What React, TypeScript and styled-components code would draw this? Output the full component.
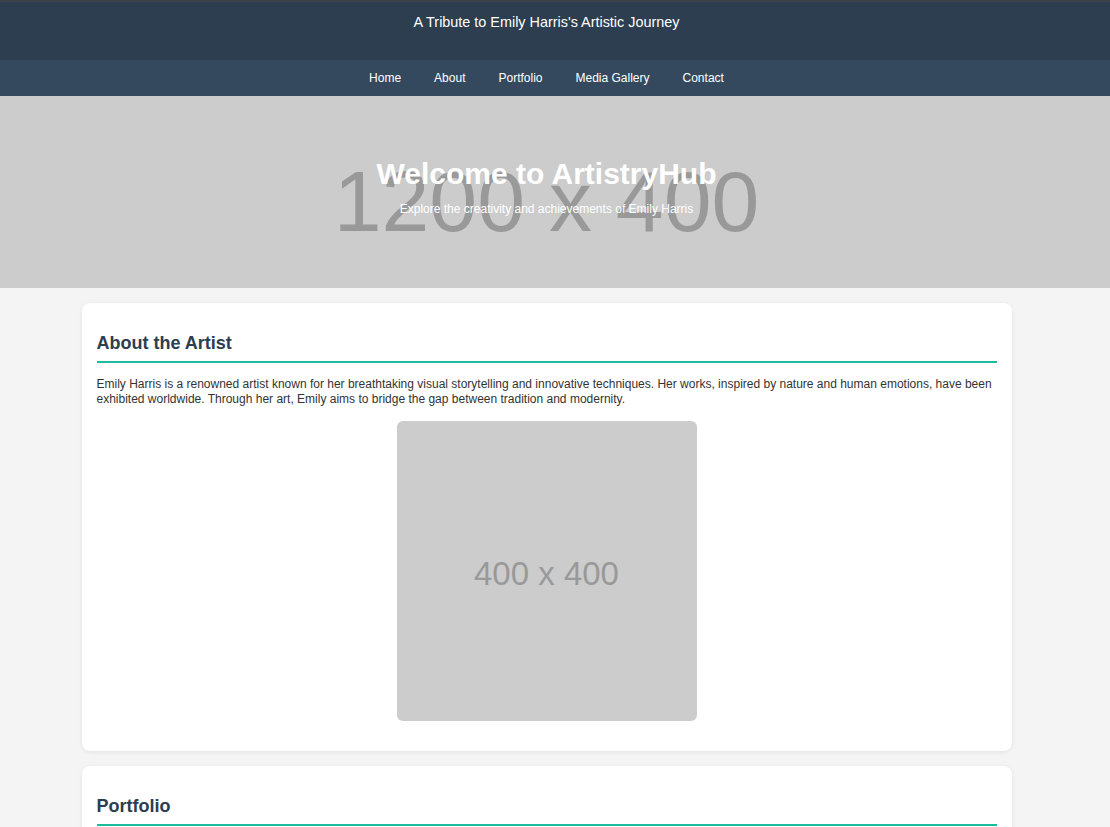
import styled, { createGlobalStyle } from 'styled-components';

const GlobalStyle = createGlobalStyle`
  * { box-sizing: border-box; }
  body {
    margin: 0;
    background: #f4f4f4;
    font-family: "Liberation Sans", Arial, sans-serif;
    color: #333;
  }
`;

const navLinks = ['Home', 'About', 'Portfolio', 'Media Gallery', 'Contact'];

export default function App() {
  return (
    <>
      <GlobalStyle />
      <Header>
        <SiteTitle>A Tribute to Emily Harris's Artistic Journey</SiteTitle>
      </Header>
      <Nav>
        {navLinks.map(link => (
          <NavLink key={link} href="#">
            {link}
          </NavLink>
        ))}
      </Nav>
      <Hero>
        <HeroPlaceholder>1200 x 400</HeroPlaceholder>
        <HeroContent>
          <HeroTitle>Welcome to ArtistryHub</HeroTitle>
          <HeroSubtitle>Explore the creativity and achievements of Emily Harris</HeroSubtitle>
        </HeroContent>
      </Hero>
      <Content>
        <Main>
          <Section>
            <SectionTitle>About the Artist</SectionTitle>
            <Text>
              Emily Harris is a renowned artist known for her breathtaking visual storytelling and
              innovative techniques. Her works, inspired by nature and human emotions, have been
              exhibited worldwide. Through her art, Emily aims to bridge the gap between tradition
              and modernity.
            </Text>
            <Portrait>400 x 400</Portrait>
          </Section>
          <Section>
            <SectionTitle>Portfolio</SectionTitle>
            <Text>A selection of Emily's most celebrated works.</Text>
          </Section>
        </Main>
      </Content>
    </>
  );
}

// the reference was laid out with a 17px scrollbar gutter on the right
const gutter = '17px';

const Header = styled.header`
  height: 60px;
  background: #2c3e50;
  border-top: 2px solid #3d4148;
  padding: 12px ${gutter} 0 0;
  text-align: center;
`;

const SiteTitle = styled.h1`
  margin: 0;
  font-size: 14.4px;
  font-weight: normal;
  line-height: 16px;
  color: #fff;
`;

const Nav = styled.nav`
  height: 36px;
  background: #34495e;
  padding-right: ${gutter};
  display: flex;
  justify-content: center;
  align-items: center;
  gap: 33px;
`;

const NavLink = styled.a`
  color: #fff;
  font-size: 12px;
  font-weight: normal;
  text-decoration: none;
`;

const Hero = styled.section`
  position: relative;
  height: 192px;
  background: #cccccc;
  overflow: hidden;
  padding-right: ${gutter};
  display: flex;
  align-items: center;
  justify-content: center;
`;

const HeroPlaceholder = styled.div`
  position: absolute;
  inset: 0 ${gutter} 0 0;
  display: flex;
  align-items: center;
  justify-content: center;
  padding-top: 18px;
  font-size: 86px;
  color: #999;
  white-space: nowrap;
`;

const HeroContent = styled.div`
  position: relative;
  text-align: center;
  color: #fff;
  margin-top: -12px;
`;

const HeroTitle = styled.h2`
  margin: 0 0 11px;
  font-size: 30px;
  font-weight: bold;
  line-height: 34px;
`;

const HeroSubtitle = styled.p`
  margin: 0;
  font-size: 12px;
  line-height: 14px;
`;

const Content = styled.div`
  padding-right: ${gutter};
`;

const Main = styled.main`
  width: 930px;
  margin: 15px auto 0;
  display: flex;
  flex-direction: column;
  gap: 15px;
`;

const Section = styled.section`
  background: #fff;
  border-radius: 8px;
  padding: 15px;
  box-shadow: 0 1px 4px rgba(0, 0, 0, 0.08);
`;

const SectionTitle = styled.h2`
  margin: 15px 0 14px;
  padding-bottom: 7px;
  border-bottom: 2px solid #1abc9c;
  font-size: 18px;
  line-height: 21px;
  color: #2c3e50;
`;

const Text = styled.p`
  margin: 0;
  font-size: 12px;
  line-height: 15px;
  color: #333;
`;

const Portrait = styled.div`
  width: 300px;
  height: 300px;
  margin: 14px auto 15px;
  padding-top: 6px;
  border-radius: 6px;
  background: #cccccc;
  color: #999;
  font-size: 33px;
  display: flex;
  align-items: center;
  justify-content: center;
`;
